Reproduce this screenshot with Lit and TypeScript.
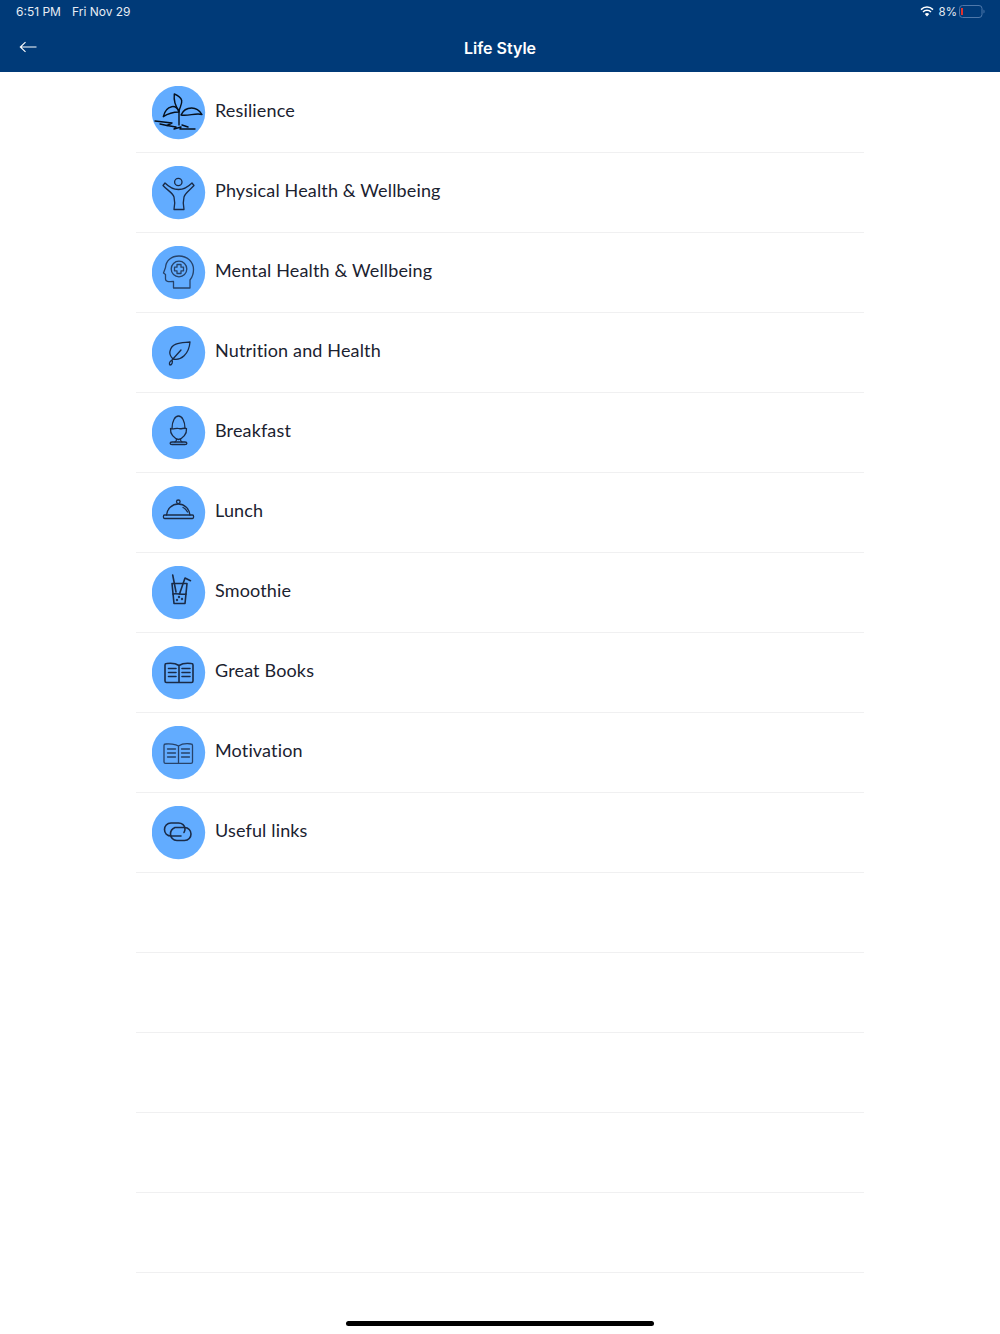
import { LitElement, html, css, svg } from "lit";
import { customElement } from "lit/decorators.js";

const bookLines = (a: number[], l: number, r: number, l2: number, r2: number) =>
  a.map((y) => svg`<path d="M${l} ${y}H${r}M${l2} ${y}H${r2}"/>`);

const items = [
  {
    label: "Resilience",
    cls: "black",
    icon: svg`
      <path d="M24.300 10C28 11.500 31 13.500 31.700 16.500C32.300 20 30 23 29 27C26 23 23.500 17 24.300 10Z"/>
      <path d="M13.300 32.700C14.500 27.500 18 23.500 21.700 22.700C25 22 27.500 24 29 28C24 28 18 29.500 13.300 32.700Z"/>
      <path d="M31 31C33 26.500 37.500 24 41.700 24C46 24 49.500 26.500 52 30.500C46 28.500 38 32.500 31 31Z"/>
      <path d="M29 27V41"/>
      <path d="M5 37L22 39L17 41.500L26 43L24 45L31 43L30 45H45"/>
      <path d="M10 40L17 41.500M32 41L38 43"/>`,
  },
  {
    label: "Physical Health & Wellbeing",
    icon: svg`
      <circle cx="28.300" cy="18" r="3.700"/>
      <path d="M15 19C20 24 25 25.500 28.500 25.500C32 25.500 37 24 42 19L44 21.500C40 26 35 29 34 33C33 37 33 41 34 45.500H24C25 41 25 37 24 33C23 29 17 26 13 21.500Z"/>`,
  },
  {
    label: "Mental Health & Wellbeing",
    cls: "soft",
    icon: svg`
      <path d="M40 44V36C42.500 33 43.500 29 43.500 25.500C43.500 17.500 37 12 29 12C21 12 16 17 15.500 23.500L13.500 29L15.500 30.500V35C15.500 37.500 18 38 23.500 37.500V44Z"/>
      <circle cx="29" cy="25" r="7.800"/>
      <path d="M27 20.500H31V23.200H33.500V26.800H31V29.500H27V26.800H24.500V23.200H27Z"/>`,
  },
  {
    label: "Nutrition and Health",
    icon: svg`
      <path d="M40 18C32 19 22 18 20 27C19 31 21 33 23 35C31 37 39 30 40 18Z"/>
      <path d="M31 26L22 36C19 38 19 40 20 41C22 41 23 38 22 36"/>`,
  },
  {
    label: "Breakfast",
    icon: svg`
      <path d="M22 24.500C22 17 25 12 28.500 12C32 12 35 17 35 24.500"/>
      <path d="M20.500 24.500C23 26 26 23.500 28.500 24.500C31 25.500 34 23.500 36.500 24.500C37 30 33 34.500 28.500 35.500C24 34.500 20 30 20.500 24.500Z"/>
      <path d="M26.500 35.200C26.500 36.500 26 37.500 25 38M30.500 35.200C30.500 36.500 31 37.500 32 38"/>
      <path d="M22 38H35C37.500 38 37.500 40.500 35 40.500H22C19.500 40.500 19.500 38 22 38Z"/>`,
  },
  {
    label: "Lunch",
    icon: svg`
      <circle cx="28.300" cy="17.800" r="1.800"/>
      <path d="M16.500 31C17 25 22 20 28.300 20C34.500 20 39.500 25 40 31"/>
      <path d="M14.500 31H42.500C44 31 44 34.500 42.500 34.500H14.500C13 34.500 13 31 14.500 31Z"/>
      <path d="M33 23.500C35 24.500 36.500 26 37.500 28"/>`,
  },
  {
    label: "Smoothie",
    cls: "bold",
    icon: svg`
      <path d="M22 19.500H37L35 39.500H24Z"/>
      <path d="M23 30C26 29 33 31 36 30"/>
      <path d="M22.700 11L26 28"/>
      <path d="M40.500 16.700L35 14L29.500 30"/>
      <circle cx="29" cy="33" r=".4"/><circle cx="32" cy="35" r=".4"/><circle cx="27" cy="36" r=".4"/>`,
  },
  {
    label: "Great Books",
    cls: "bold",
    icon: svg`
      <path d="M29 21.500C26 19.500 20 19 16.500 19.500C15.500 19.500 15 20 15 21V37C15 38 15.500 38.500 16.500 38.500H41.500C42.500 38.500 43 38 43 37V21C43 20 42.500 19.500 41.500 19.500C38 19 32 19.500 29 21.500V38.500"/>
      ${bookLines([24.5, 28.5, 32.5], 18.5, 26, 32, 40)}`,
  },
  {
    label: "Motivation",
    cls: "soft",
    icon: svg`
      <path d="M28.500 22C25.500 20 19 19.500 15.500 20C14.500 20 14 20.500 14 21.500V38C14 38.800 14.500 39.300 15.500 39.300H41C42 39.300 42.500 38.800 42.500 38V21.500C42.500 20.500 42 20 41 20C37.500 19.500 31.500 20 28.500 22V39.300"/>
      ${bookLines([25, 29, 33], 17.5, 25.500, 31.500, 39.500)}`,
  },
  {
    label: "Useful links",
    cls: "bold",
    icon: svg`
      <path d="M31 32H21.500C17 32 14.500 29 14.500 25.500C14.500 22 17 19 21 19H28.500C32 19 35 21.500 35 25C35 26.500 34.500 27.500 34 28.500"/>
      <path d="M25 23.500H34.500C38.500 23.500 41 26.500 41 30C41 33.500 38.500 36.500 34.500 36.500H27C23 36.500 20.500 33.500 20.500 30C20.500 27 22.500 24.500 25 23.500Z"/>`,
  },
];

@customElement("app-root")
export class AppRoot extends LitElement {
  static styles = css`
    :host {
      display: flex;
      flex-direction: column;
      width: 1000px;
      height: 1334px;
      background: #fff;
      font-family: "Lato", "Liberation Sans", sans-serif;
      overflow: hidden;
    }
    header {
      background: #003a78;
      color: #fff;
      height: 72px;
      flex: none;
      display: flex;
      flex-direction: column;
      font-family: "Inter", "Liberation Sans", sans-serif;
    }
    .status {
      height: 23px;
      padding: 0 15px 0 16px;
      display: flex;
      align-items: center;
      font-size: 12px;
      color: #e6ecf4;
    }
    .status .date {
      margin-left: 11px;
    }
    .status .right {
      margin-left: auto;
      display: flex;
      align-items: center;
    }
    .pct {
      margin: 0 2px 0 5px;
      font-size: 11.500px;
    }
    .wifi {
      display: block;
    }
    .nav {
      flex: 1;
      position: relative;
      display: flex;
      align-items: center;
      justify-content: center;
      padding-top: 1px;
      font-size: 16px;
      font-weight: 600;
    }
    .back {
      position: absolute;
      left: 19px;
      top: 18px;
    }
    .list {
      margin: 0 136px;
      list-style: none;
      padding: 1px 0 0;
      flex: none;
    }
    .row {
      box-sizing: border-box;
      height: 80px;
      border-bottom: 1px solid #f0f0f1;
      display: flex;
      align-items: center;
      padding: 1px 0 0 16px;
      gap: 9px;
      font-size: 18px;
      color: #1b2230;
    }
    .row span {
      margin-bottom: 6px;
      letter-spacing: 0.15px;
    }
    .badge {
      width: 54px;
      height: 54px;
      flex: none;
      display: block;
    }
    .badge circle.bg {
      fill: #62acff;
      stroke: none;
    }
    .badge g {
      fill: none;
      stroke: #1a2b47;
      stroke-width: 1.300;
      stroke-linecap: round;
      stroke-linejoin: round;
    }
    .badge g.black {
      stroke: #06101c;
      stroke-width: 1.400;
    }
    .badge g.soft {
      stroke: #27436a;
    }
    .badge g.bold {
      stroke-width: 1.600;
    }
    .home {
      width: 308px;
      height: 5px;
      border-radius: 3px;
      background: #000;
      margin: 48px auto 0;
      flex: none;
    }
  `;

  render() {
    return html`
      <header>
        <div class="status">
          <span>6:51 PM</span>
          <span class="date">Fri Nov 29</span>
          <div class="right">
            <svg class="wifi" width="14" height="11" viewBox="0 0 14 11">
              <path fill="#fff" d="M7 10.500L4.800 8.100A3.200 3.200 0 0 1 9.200 8.100Z" />
              <path fill="none" stroke="#fff" stroke-width="1.500" d="M3 6A5.700 5.700 0 0 1 11 6M1 3.600A8.500 8.500 0 0 1 13 3.600" />
            </svg>
            <span class="pct">8%</span>
            <svg width="26" height="13" viewBox="0 0 26 13">
              <rect x=".5" y=".5" width="22.500" height="12" rx="3" fill="none" stroke="#4f78aa" />
              <rect x="2" y="3" width="2" height="7" fill="#e0322e" />
              <path d="M24.500 4.500C25.300 5 25.500 5.500 25.500 6.500C25.500 7.500 25.300 8 24.500 8.500Z" fill="#4f78aa" />
            </svg>
          </div>
        </div>
        <div class="nav">
          <svg class="back" width="18" height="12" viewBox="0 0 18 12">
            <path d="M17.500 6H1.500M6.500 1.200L1.300 6L6.500 10.800" fill="none" stroke="#fff" stroke-width="1.100" />
          </svg>
          Life Style
        </div>
      </header>
      <ul class="list">
        ${items.map(
          (i) => html`<li class="row">
            <svg class="badge" viewBox="2 2 54 54">
              <circle class="bg" cx="28.500" cy="28.500" r="26.700" />
              <g class=${i.cls ?? ""}>${i.icon}</g>
            </svg>
            <span>${i.label}</span>
          </li>`
        )}
        ${Array.from({ length: 5 }, () => html`<li class="row"></li>`)}
      </ul>
      <div class="home"></div>
    `;
  }
}
